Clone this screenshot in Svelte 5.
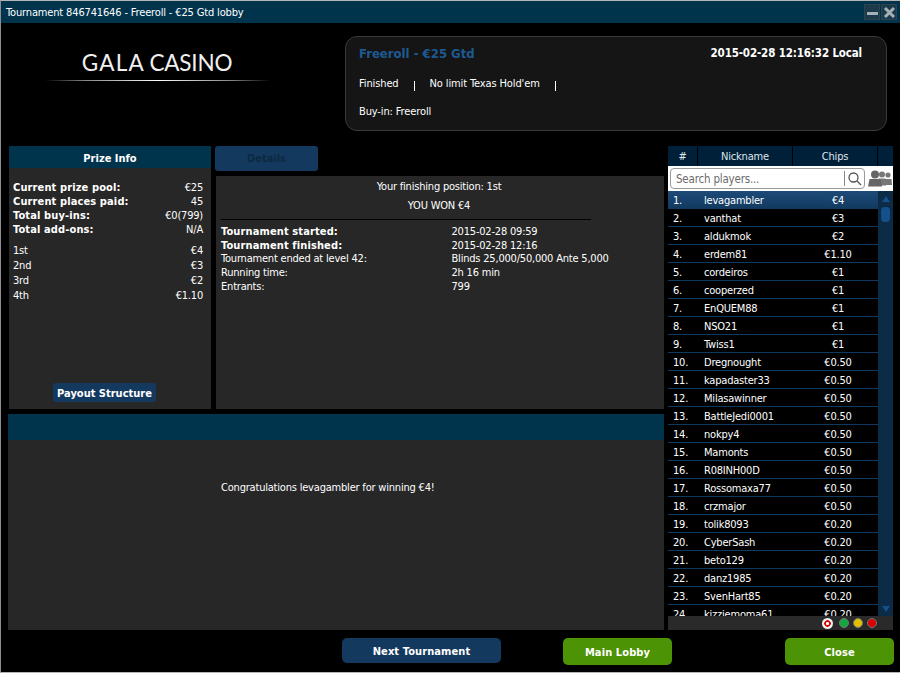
<script>
  const prizeStats = [
    { label: 'Current prize pool:', value: '€25' },
    { label: 'Current places paid:', value: '45' },
    { label: 'Total buy-ins:', value: '€0(799)' },
    { label: 'Total add-ons:', value: 'N/A' }
  ];
  const places = [
    { label: '1st', value: '€4' },
    { label: '2nd', value: '€3' },
    { label: '3rd', value: '€2' },
    { label: '4th', value: '€1.10' }
  ];
  const details = [
    { label: 'Tournament started:', value: '2015-02-28 09:59', bold: true },
    { label: 'Tournament finished:', value: '2015-02-28 12:16', bold: true },
    { label: 'Tournament ended at level 42:', value: 'Blinds 25,000/50,000 Ante 5,000' },
    { label: 'Running time:', value: '2h 16 min' },
    { label: 'Entrants:', value: '799' }
  ];
  const players = [
    ['levagambler', '€4'], ['vanthat', '€3'], ['aldukmok', '€2'], ['erdem81', '€1.10'],
    ['cordeiros', '€1'], ['cooperzed', '€1'], ['EnQUEM88', '€1'], ['NSO21', '€1'],
    ['Twiss1', '€1'], ['Dregnought', '€0.50'], ['kapadaster33', '€0.50'], ['Milasawinner', '€0.50'],
    ['BattleJedi0001', '€0.50'], ['nokpy4', '€0.50'], ['Mamonts', '€0.50'], ['R08INH00D', '€0.50'],
    ['Rossomaxa77', '€0.50'], ['crzmajor', '€0.50'], ['tolik8093', '€0.20'], ['CyberSash', '€0.20'],
    ['beto129', '€0.20'], ['danz1985', '€0.20'], ['SvenHart85', '€0.20'], ['kizziemoma61', '€0.20']
  ];
</script>

<div class="window">
  <div class="titlebar">
    <span class="title">Tournament 846741646 - Freeroll - €25 Gtd lobby</span>
    <div class="winbtns">
      <span class="winbtn"><i class="min"></i></span>
      <span class="winbtn">
        <svg width="13" height="13" viewBox="0 0 13 13"><path d="M2 2 L11 11 M11 2 L2 11" stroke="#a3b1b8" stroke-width="3"/></svg>
      </span>
    </div>
  </div>

  <div class="header">
    <div class="logo">
      <div class="logo-text"><span>GALA</span> CASINO</div>
      <div class="logo-line"></div>
    </div>
    <div class="infobox">
      <div class="info-top">
        <span class="info-title">Freeroll - €25 Gtd</span>
        <span class="info-date">2015-02-28 12:16:32 Local</span>
      </div>
      <div class="info-row">
        <span>Finished</span><i class="sep"></i><span>No limit Texas Hold'em</span><i class="sep"></i>
      </div>
      <div class="info-buyin">Buy-in: Freeroll</div>
    </div>
  </div>

  <div class="main">
    <div class="col-left">
      <div class="top-panels">
        <div class="prize">
          <div class="prize-head">Prize Info</div>
          <div class="prize-body">
            {#each prizeStats as s}
              <div class="kv"><b>{s.label}</b><span>{s.value}</span></div>
            {/each}
            <div class="places">
              {#each places as p}
                <div class="kv place"><span>{p.label}</span><span>{p.value}</span></div>
              {/each}
            </div>
            <div class="payout"><span>Payout Structure</span></div>
          </div>
        </div>
        <div class="center">
          <div class="tab">Details</div>
          <div class="details">
            <div class="finish">Your finishing position: 1st</div>
            <div class="won">YOU WON €4</div>
            <div class="rule"></div>
            {#each details as d}
              <div class="detail-row" class:strong={d.bold}>
                {#if d.bold}<b>{d.label}</b>{:else}<span>{d.label}</span>{/if}
                <span>{d.value}</span>
              </div>
            {/each}
          </div>
        </div>
      </div>
      <div class="message">
        <div class="message-head"></div>
        <div class="message-body">Congratulations levagambler for winning €4!</div>
      </div>
    </div>

    <div class="col-right">
      <div class="list-head">
        <span class="h-num">#</span><span class="h-nick">Nickname</span><span class="h-chips">Chips</span><span class="h-end"></span>
      </div>
      <div class="search">
        <div class="search-box">
          <span class="placeholder">Search players...</span>
          <span class="glass">
            <svg width="15" height="15" viewBox="0 0 15 15" fill="none" stroke="#555" stroke-width="1.3"><circle cx="6.5" cy="6.5" r="4.5"/><path d="M10 10 L14 14"/></svg>
          </span>
        </div>
        <svg class="people" width="24" height="17" viewBox="0 0 24 17" fill="#777">
          <circle cx="20" cy="5" r="2.600"/><path d="M16 15 L16.500 9 L23.500 9 L24 15 Z"/>
          <circle cx="14" cy="4.500" r="3"/><path d="M10 15.500 L10.500 8.500 L17.500 8.500 L18 15.500 Z"/>
          <circle cx="7" cy="4.500" r="4" fill="#666"/><path d="M0 16.500 L1.500 9 L12.500 9 L14 16.500 Z" fill="#666"/>
        </svg>
      </div>
      <div class="list-wrap">
        <div class="list">
          {#each players as p, i}
            <div class="player" class:active={i === 0}>
              <span class="p-num">{i + 1}.</span>
              <span class="p-nick">{p[0]}</span>
              <span class="p-chips">{p[1]}</span>
            </div>
          {/each}
        </div>
        <div class="scrollbar">
          <i class="arrow up"></i>
          <i class="thumb"></i>
          <i class="arrow down"></i>
        </div>
      </div>
      <div class="status">
        <i class="dot target"></i>
        <i class="dot" style="background:#10a83c"></i>
        <i class="dot" style="background:#e0c000"></i>
        <i class="dot" style="background:#d80000"></i>
      </div>
    </div>
  </div>

  <div class="footer">
    <button class="btn blue next">Next Tournament</button>
    <button class="btn green lobby">Main Lobby</button>
    <button class="btn green close">Close</button>
  </div>
</div>

<style>
  :global(body) { margin: 0; background: #000; }

  .window {
    width: 900px; height: 673px; box-sizing: border-box;
    display: flex; flex-direction: column;
    background: #000; color: #fff;
    border-top: 1px solid #b5b5b5; border-left: 1px solid #8d8d8d; border-bottom: 1px solid #b5b5b5;
    font: 11px/16px "DejaVu Sans Condensed", "DejaVu Sans", sans-serif;
    letter-spacing: -0.2px;
    overflow: hidden;
  }
  b { font: 700 11px/14px "DejaVu Sans Condensed", "DejaVu Sans", sans-serif; letter-spacing: 0.12px; position: relative; top: 1px; }

  .titlebar {
    height: 22px; background: #00344d; flex: none;
    display: flex; align-items: center; justify-content: space-between;
    padding-left: 5px;
  }
  .title { margin-top: 2px; letter-spacing: -0.15px; }
  .winbtns { display: flex; margin-right: 3px; gap: 1px; }
  .winbtn {
    width: 16px; height: 16px; background: #1c3a4a; border: 1px solid #2b4452;
    display: flex; align-items: center; justify-content: center; box-sizing: border-box;
  }
  .min { display: block; width: 11px; height: 3px; margin-top: 3px; background: #a3b1b8; }

  .header { height: 123px; flex: none; display: flex; }
  .logo { width: 226px; margin: 27px 0 0 44px; }
  .logo-text {
    text-align: center; font: 400 22.5px/26px Lato, sans-serif; letter-spacing: -0.2px; color: #f0f0f0;
    padding-right: 2px;
  }
  .logo-text span { letter-spacing: 1.2px; margin-right: -1px; }
  .logo-line {
    height: 1px; margin-top: 4px;
    background: linear-gradient(90deg, #000, #888 18%, #fff 50%, #888 82%, #000);
  }
  .infobox {
    width: 542px; height: 95px; box-sizing: border-box; margin: 13px 0 0 74px;
    background: #151515; border: 1px solid #3a3a3a; border-radius: 12px;
    padding: 7px 13px;
    letter-spacing: -0.12px;
  }
  .info-top { display: flex; justify-content: space-between; height: 18px; align-items: center; letter-spacing: 0; }
  .info-title { color: #1d5a92; font: 700 13px "DejaVu Sans Condensed", sans-serif; }
  .info-date { font: 700 11.5px "DejaVu Sans Condensed", sans-serif; margin-right: 11px; letter-spacing: -0.15px; }
  .info-row { display: flex; align-items: center; margin-top: 15px; height: 14px; }
  .sep { width: 1px; height: 10px; background: #fff; margin: 3px 15px 0 15px; }
  .info-buyin { margin-top: 13px; }

  .main { flex: 1; display: flex; min-height: 0; padding-left: 7px; }
  .col-left { width: 656px; display: flex; flex-direction: column; }
  .top-panels { height: 263px; display: flex; padding-left: 1px; }

  .prize { width: 202px; background: #272727; display: flex; flex-direction: column; }
  .prize-head {
    height: 22px; text-align: center; background: #00344d; letter-spacing: 0;
    font: 700 11px/26px "DejaVu Sans Condensed", sans-serif;
  }
  .prize-body { flex: 1; padding: 12px 8px 7px 4px; display: flex; flex-direction: column; }
  .kv { display: flex; justify-content: space-between; height: 14px; }
  .kv.place { height: 15px; }
  .places { margin-top: 7px; }
  .payout { margin-top: auto; text-align: center; margin-right: 7px; }
  .payout span {
    display: inline-block; background: #14395e; border-radius: 3px; padding: 0 4px; height: 19px; letter-spacing: 0;
    font: 700 11px/21px "DejaVu Sans Condensed", sans-serif;
  }

  .center { width: 448px; margin-left: 5px; display: flex; flex-direction: column; }
  .tab {
    width: 103px; height: 25px; background: #14395e; border-radius: 3px; margin-left: -1px; letter-spacing: 0;
    text-align: center; color: #0c2942; font: 700 11px/25px "DejaVu Sans Condensed", sans-serif;
  }
  .details { flex: 1; margin-top: 5px; background: #272727; padding: 3px 5px; }
  .finish { text-align: center; height: 20px; margin-right: 2px; }
  .won { text-align: center; height: 14px; line-height: 13px; margin-right: 2px; }
  .rule { width: 370px; height: 1px; background: #000; margin: 6px 0 3px; }
  .detail-row { display: grid; grid-template-columns: 230.500px 1fr; height: 14px; }
  .detail-row.strong { padding-top: 1px; margin-bottom: -1px; }

  .message { margin-top: 5px; height: 216px; display: flex; flex-direction: column; background: #272727; }
  .message-head { height: 26px; background: #00344d; }
  .message-body { padding-top: 40px; margin-left: 213px; }

  .col-right { width: 225px; margin-left: 4px; display: flex; flex-direction: column; height: 484px; }
  .list-head { height: 20px; display: flex; background: #00203a; line-height: 22px; text-align: center; color: #dfe6ea; }
  .list-head span { display: block; border-right: 1px solid #000; box-sizing: border-box; }
  .h-num { width: 30px; }
  .h-nick { width: 95px; }
  .h-chips { width: 85px; }
  .h-end { flex: 1; border-right: 0 !important; }

  .search {
    height: 25px; background: #fff; display: flex; align-items: center;
    padding-left: 2px; box-sizing: border-box;
  }
  .search-box {
    width: 195px; height: 21px; box-sizing: border-box;
    border: 1px solid #9a9a9a; border-radius: 4px;
    display: flex; align-items: center; justify-content: space-between;
    padding-left: 5px;
  }
  .placeholder { color: #6c6c6c; font-size: 11.5px; }
  .glass { width: 19px; height: 15px; border-left: 1px solid #888; display: flex; justify-content: center; }
  .people { margin-left: 3px; }

  .list-wrap { flex: 1; display: flex; min-height: 0; background: #000; }
  .list { width: 210px; overflow: hidden; }
  .player {
    height: 18px; display: flex; line-height: 20px; box-sizing: border-box;
    border-bottom: 1px solid #0e3a62;
  }
  .player.active { background: linear-gradient(#1d4a78, #123a60); border-bottom: 0; }
  .p-num { width: 36px; padding-left: 5px; box-sizing: border-box; }
  .p-nick { width: 114px; }
  .p-chips { width: 40px; text-align: center; }
  .scrollbar {
    width: 15px; background: #0c2b47; display: flex; flex-direction: column; align-items: center;
    padding-top: 5px; box-sizing: border-box;
  }
  .arrow { width: 0; height: 0; border-left: 4px solid transparent; border-right: 4px solid transparent; }
  .arrow.up { border-bottom: 6px solid #14508c; }
  .arrow.down { border-top: 6px solid #14508c; margin-top: auto; margin-bottom: 4px; }
  .thumb { width: 9px; height: 15px; border-radius: 4px; background: #14508c; margin-top: 5px; }

  .status {
    height: 14px; background: #2a2a2a; display: flex; align-items: center; justify-content: flex-end;
    gap: 4px; padding-right: 16px;
  }
  .dot { width: 10px; height: 10px; border-radius: 50%; display: block; border: 0.500px solid #777; box-sizing: border-box; }
  .dot.target {
    background: radial-gradient(circle, #fff 0 1.3px, #d00 1.8px 3px, #eee 3.5px);
    border: 0; margin-right: 2px; width: 11px; height: 11px;
  }

  .footer { flex: none; height: 42px; display: flex; align-items: flex-start; padding-top: 8px; box-sizing: border-box; }
  .btn {
    border: 0; color: #fff; border-radius: 5px; font: 700 11px "DejaVu Sans Condensed", sans-serif; padding: 1px 0 0;
    letter-spacing: 0.1px;
  }
  .blue { background: #14395e; }
  .green { background: #4c9305; }
  .next { width: 159px; height: 25px; margin-left: 341px; }
  .lobby { width: 109px; height: 27px; margin-left: 62px; }
  .close { width: 109px; height: 27px; margin-left: 113px; }
</style>
